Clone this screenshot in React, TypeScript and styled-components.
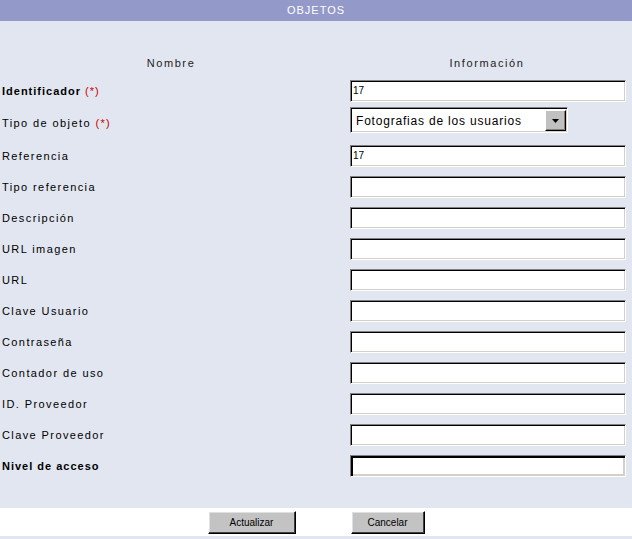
import styled, { createGlobalStyle } from "styled-components";

const GlobalStyle = createGlobalStyle`
  html, body {
    margin: 0;
    padding: 0;
    background-color: #e2e6f0;
  }

  body {
    font-family: "Liberation Sans", Arial, sans-serif;
    font-size: 11px;
    color: #000;
  }
`;

const Page = styled.div`
  width: 632px;
  min-height: 539px;
  background-color: #e2e6f0;
`;

const TitleBar = styled.div`
  height: 21px;
  line-height: 21px;
  background-color: #9399c8;
  color: #fff;
  text-align: center;
  font-size: 11px;
  letter-spacing: 1px;
`;

const FormPanel = styled.div`
  padding: 35px 0 27px;
`;

const HeadRow = styled.div`
  display: grid;
  grid-template-columns: 342px 290px;
  height: 14px;
  line-height: 14px;
  margin-bottom: 5px;
  color: #222;
  letter-spacing: 1.6px;
`;

const HeadCell = styled.div`
  text-align: center;
`;

const FieldRow = styled.div<{ $height: number }>`
  display: grid;
  grid-template-columns: 350px 276px;
  align-items: center;
  height: ${({ $height }) => $height}px;
`;

const Label = styled.label<{ $bold?: boolean }>`
  padding-left: 2px;
  letter-spacing: ${({ $bold }) => ($bold ? "1px" : "1.4px")};
  font-weight: ${({ $bold }) => ($bold ? "bold" : "normal")};
  white-space: nowrap;
`;

const Required = styled.span`
  color: #cc0000;
  font-weight: normal;
`;

const TextInput = styled.input`
  box-sizing: border-box;
  width: 276px;
  height: 22px;
  margin: 0;
  padding: 0 2px;
  border: 1px solid;
  border-color: #808080 #ffffff #ffffff #808080;
  box-shadow: inset 1px 1px 0 #000, inset -1px -1px 0 #d4d0c8;
  background-color: #fff;
  font-family: "Liberation Sans", Arial, sans-serif;
  font-size: 10px;
  color: #000;
  outline: none;
  caret-color: #000;

  &:focus {
    box-shadow: inset 2px 2px 0 #000, inset -2px -2px 0 #d4d0c8;
  }
`;

const SelectBox = styled.div`
  box-sizing: border-box;
  align-self: start;
  margin-top: 1px;
  width: 218px;
  height: 26px;
  display: flex;
  align-items: stretch;
  border: 1px solid;
  border-color: #808080 #ffffff #ffffff #808080;
  box-shadow: inset 1px 1px 0 #000, inset -1px -1px 0 #d4d0c8;
  padding: 2px 1px 1px 2px;
  background-color: #fff;
`;

const SelectValue = styled.span`
  flex: 1;
  display: flex;
  align-items: center;
  padding-left: 3px;
  font-size: 12px;
  letter-spacing: 0.8px;
  white-space: nowrap;
  overflow: hidden;
`;

const ArrowButton = styled.span`
  box-sizing: border-box;
  width: 21px;
  display: flex;
  align-items: center;
  justify-content: center;
  background-color: #c0c0c0;
  border: 1px solid;
  border-color: #ffffff #000 #000 #ffffff;
  box-shadow: inset -1px -1px 0 #808080;
`;

const ButtonBar = styled.div`
  height: 28px;
  background-color: #fff;
  display: flex;
  align-items: center;
  justify-content: center;
  gap: 55px;
`;

const Button = styled.button<{ $width: number }>`
  box-sizing: border-box;
  width: ${({ $width }) => $width}px;
  height: 23px;
  margin: 0;
  padding: 0;
  background-color: #c3c3c3;
  border: 1px solid;
  border-color: #ffffff #000 #000 #ffffff;
  box-shadow: inset -1px -1px 0 #404040, inset 1px 1px 0 #e0e0e0;
  font-family: "Liberation Sans", Arial, sans-serif;
  font-size: 10px;
  color: #000;
  cursor: pointer;
`;

type Field = {
  label: string;
  value?: string;
  bold?: boolean;
  focused?: boolean;
};

const fields: Field[] = [
  { label: "Referencia", value: "17" },
  { label: "Tipo referencia" },
  { label: "Descripción" },
  { label: "URL imagen" },
  { label: "URL" },
  { label: "Clave Usuario" },
  { label: "Contraseña" },
  { label: "Contador de uso" },
  { label: "ID. Proveedor" },
  { label: "Clave Proveedor" },
  { label: "Nivel de acceso", bold: true, focused: true },
];

function DropArrow() {
  return (
    <svg width="7" height="4" viewBox="0 0 7 4">
      <path d="M0 0h7L3.5 4z" fill="#000" />
    </svg>
  );
}

export default function App() {
  return (
    <Page>
      <GlobalStyle />
      <TitleBar>OBJETOS</TitleBar>

      <FormPanel>
        <HeadRow>
          <HeadCell>Nombre</HeadCell>
          <HeadCell>Información</HeadCell>
        </HeadRow>

        <FieldRow $height={31}>
          <Label $bold>
            Identificador <Required>(*)</Required>
          </Label>
          <TextInput defaultValue="17" />
        </FieldRow>

        <FieldRow $height={34}>
          <Label>
            Tipo de objeto <Required>(*)</Required>
          </Label>
          <SelectBox>
            <SelectValue>Fotografias de los usuarios</SelectValue>
            <ArrowButton>
              <DropArrow />
            </ArrowButton>
          </SelectBox>
        </FieldRow>

        {fields.map((field) => (
          <FieldRow key={field.label} $height={31}>
            <Label $bold={field.bold}>{field.label}</Label>
            <TextInput
              defaultValue={field.value || ""}
              autoFocus={field.focused}
            />
          </FieldRow>
        ))}
      </FormPanel>

      <ButtonBar>
        <Button $width={88}>Actualizar</Button>
        <Button $width={74}>Cancelar</Button>
      </ButtonBar>
    </Page>
  );
}
